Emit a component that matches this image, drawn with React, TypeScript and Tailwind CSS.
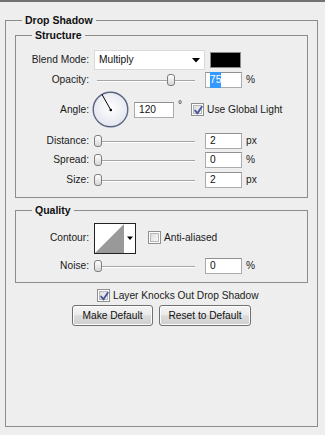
import React from "react";

const font = { fontFamily: '"Liberation Sans", Arial, sans-serif' };

function Check({ checked }: { checked?: boolean }) {
  return (
    <span className="relative inline-flex w-[13px] h-[13px] shrink-0 border border-[#8e8f8f] bg-white p-[1px]">
      <span className="flex w-full h-full items-center justify-center border border-[#b8b8b8] bg-gradient-to-br from-[#dcdcdc] to-[#f8f8f8]">
        {checked && (
          <svg width="11" height="11" viewBox="0 0 11 11" className="absolute left-[1px] top-[1px]">
            <path d="M2.2 5.6 L4.4 8.4 L8.8 1.8" fill="none" stroke="#4a5b9c" strokeWidth="1.9" strokeLinecap="round" strokeLinejoin="round" />
          </svg>
        )}
      </span>
    </span>
  );
}

function Slider({ pos }: { pos: number }) {
  return (
    <div className="relative w-[111px] h-[16px] shrink-0">
      <div className="absolute left-[3px] w-[98px] top-[8px] h-[2px] border-t border-[#a6a6a6] border-b border-b-white" />
      <div
        className="absolute top-[2px] w-[8px] h-[12px] rounded-[3px] border border-[#7d7d7d] bg-gradient-to-b from-white to-[#d6d6d6]"
        style={{ left: pos }}
      />
    </div>
  );
}

function Field({ children, w = 37 }: { children: React.ReactNode; w?: number }) {
  return (
    <div
      className="h-[16px] shrink-0 border border-[#a9abb0] border-t-[#8e9095] bg-white pl-[4px] flex items-center text-[10.2px] text-[#111]"
      style={{ width: w }}
    >
      {children}
    </div>
  );
}

function Label({ children }: { children: React.ReactNode }) {
  return <div className="w-[73px] shrink-0 text-right text-[10.2px] text-[#1a1a1a]">{children}</div>;
}

function SliderRow({ label, value, unit, pos, mt }: { label: string; value: React.ReactNode; unit: string; pos: number; mt: string }) {
  return (
    <div className={`flex items-center h-[16px] ${mt}`}>
      <Label>{label}</Label>
      <div className="ml-[5px]">
        <Slider pos={pos} />
      </div>
      <Field>{value}</Field>
      <span className="ml-[4px] text-[10.2px] text-[#1a1a1a]">{unit}</span>
    </div>
  );
}

function Button({ children, w }: { children: React.ReactNode; w: number }) {
  return (
    <div
      className="h-[21px] rounded-[3px] border border-[#707070] flex items-center justify-center text-[10.2px] text-[#111] bg-[linear-gradient(to_bottom,#f4f4f4_0%,#ebebeb_50%,#dddddd_50%,#cfcfcf_100%)] shadow-[inset_0_0_0_1px_#fcfcfc]"
      style={{ width: w }}
    >
      {children}
    </div>
  );
}

export default function App() {
  return (
    <div className="w-[325px] h-[435px] bg-[#eeeeee] border-t-2 border-[#727272] overflow-hidden" style={font}>
      <fieldset className="ml-[5px] mt-[12px] w-[313px] h-[413px] border border-[#8c8c8c] p-0">
        <legend className="ml-[16px] px-[3px] text-[10.5px] font-bold leading-[13px] text-[#111]">Drop Shadow</legend>

        <fieldset className="ml-[9px] mt-[2px] w-[293px] h-[169px] border border-[#8c8c8c] p-0">
          <legend className="ml-[16px] px-[3px] text-[10.5px] font-bold leading-[13px] text-[#111]">Structure</legend>

          <div className="flex items-center h-[20px] mt-[8px]">
            <Label>Blend Mode:</Label>
            <div className="ml-[5px] w-[111px] h-[20px] bg-white border border-[#d9d9d9] flex items-center justify-between pl-[4px] pr-[4px]">
              <span className="text-[10.2px] text-[#111]">Multiply</span>
              <svg width="8" height="5" viewBox="0 0 8 5">
                <path d="M0 0 H8 L4 4.5 Z" fill="#000" />
              </svg>
            </div>
            <div className="ml-[5px] w-[31px] h-[16px] border border-[#8a8a8a] bg-black" />
          </div>

          <SliderRow
            label="Opacity:"
            mt="mt-[2px]"
            pos={73}
            unit="%"
            value={<span className="bg-[#3399ff] text-white px-[0px]">75</span>}
          />

          <div className="flex items-center h-[37px] mt-[3px]">
            <Label>Angle:</Label>
            <svg width="37" height="37" viewBox="0 0 37 37" className="ml-[3px] shrink-0">
              <defs>
                <radialGradient id="dial" cx="50%" cy="45%" r="55%">
                  <stop offset="0%" stopColor="#ffffff" />
                  <stop offset="100%" stopColor="#e4e6ee" />
                </radialGradient>
              </defs>
              <circle cx="18.5" cy="18.5" r="17.3" fill="url(#dial)" stroke="#5a6584" strokeWidth="1.4" />
              <line x1="18.5" y1="18.5" x2="10" y2="3.5" stroke="#000" strokeWidth="1" />
              <circle cx="18.8" cy="19" r="1.3" fill="#000" />
            </svg>
            <div className="ml-[5px]">
              <Field w={40}>120</Field>
            </div>
            <span className="ml-[4px] text-[10.2px] text-[#1a1a1a] self-start mt-[9px] leading-none">°</span>
            <div className="ml-[9px] flex items-center">
              <Check checked />
              <span className="ml-[3px] text-[10.2px] text-[#1a1a1a]">Use Global Light</span>
            </div>
          </div>

          <SliderRow label="Distance:" mt="mt-[5px]" pos={0} unit="px" value="2" />
          <SliderRow label="Spread:" mt="mt-[3px]" pos={0} unit="%" value="0" />
          <SliderRow label="Size:" mt="mt-[4px]" pos={0} unit="px" value="2" />
        </fieldset>

        <fieldset className="ml-[9px] mt-[6px] w-[293px] h-[79px] border border-[#8c8c8c] p-0">
          <legend className="ml-[16px] px-[3px] text-[10.5px] font-bold leading-[13px] text-[#111]">Quality</legend>

          <div className="flex items-center h-[30px] mt-[6px]">
            <Label>Contour:</Label>
            <svg width="42" height="31" viewBox="0 0 42 31" className="ml-[5px] shrink-0">
              <rect x="0.5" y="0.5" width="41" height="30" fill="#fff" stroke="#222" />
              <polygon points="1,30 30,1 30,30" fill="#999" />
              <path d="M33 13.5 H39 L36 17 Z" fill="#000" />
            </svg>
            <div className="ml-[12px] flex items-center">
              <Check />
              <span className="ml-[3px] text-[10.2px] text-[#1a1a1a]">Anti-aliased</span>
            </div>
          </div>

          <SliderRow label="Noise:" mt="mt-[5px]" pos={0} unit="%" value="0" />
        </fieldset>

        <div className="flex items-center mt-[6px] ml-[91px] h-[13px]">
          <Check checked />
          <span className="ml-[3px] text-[10.2px] text-[#1a1a1a]">Layer Knocks Out Drop Shadow</span>
        </div>

        <div className="flex justify-center gap-[6px] mt-[3px]">
          <Button w={81}>Make Default</Button>
          <Button w={92}>Reset to Default</Button>
        </div>
      </fieldset>
    </div>
  );
}
